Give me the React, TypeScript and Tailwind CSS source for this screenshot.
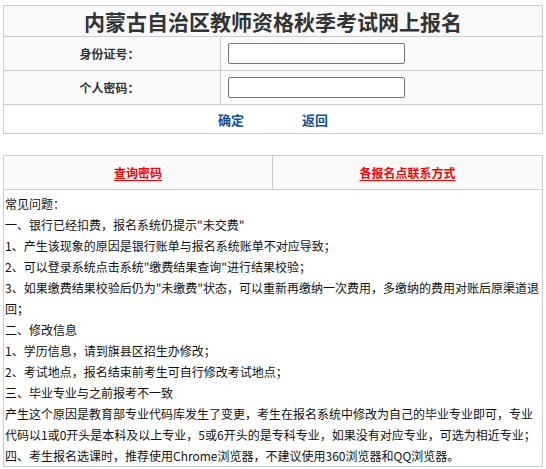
import React from "react";

const faq = [
  "常见问题：",
  "一、银行已经扣费，报名系统仍提示\"未交费\"",
  "1、产生该现象的原因是银行账单与报名系统账单不对应导致；",
  "2、可以登录系统点击系统\"缴费结果查询\"进行结果校验；",
  "3、如果缴费结果校验后仍为\"未缴费\"状态，可以重新再缴纳一次费用，多缴纳的费用对账后原渠道退",
  "回；",
  "二、修改信息",
  "1、学历信息，请到旗县区招生办修改；",
  "2、考试地点，报名结束前考生可自行修改考试地点；",
  "三、毕业专业与之前报考不一致",
  "产生这个原因是教育部专业代码库发生了变更，考生在报名系统中修改为自己的毕业专业即可，专业",
  "代码以1或0开头是本科及以上专业，5或6开头的是专科专业，如果没有对应专业，可选为相近专业；",
  "四、考生报名选课时，推荐使用Chrome浏览器，不建议使用360浏览器和QQ浏览器。",
];

export default function App() {
  return (
    <div
      className="min-h-[469px] bg-white pl-[3px] pt-[5px] [text-spacing-trim:space-all]"
      style={{ fontFamily: '"Noto Sans CJK SC", "Microsoft YaHei", sans-serif' }}
    >
      {/* login box */}
      <div className="w-[540px] border border-[#cccccc]">
        <div className="flex h-[31px] items-center justify-center border-b border-[#cccccc] bg-[#f9f9f9]">
          <h1 className="text-[21px] font-bold leading-none text-[#333333]">
            内蒙古自治区教师资格秋季考试网上报名
          </h1>
        </div>
        {["身份证号：", "个人密码："].map((label, i) => (
          <div key={label} className="flex h-[34px] border-b border-[#cccccc] bg-[#fafafa]">
            <div className="flex w-[217px] items-center justify-center border-r border-[#cccccc] pr-[5px] text-[12px] font-bold text-[#333333]">
              {label}
            </div>
            <div className="flex flex-1 items-center pl-[7px]">
              <input
                type={i === 1 ? "password" : "text"}
                className="h-[21px] w-[177px] rounded-[2px] border border-[#767676] bg-white outline-none"
              />
            </div>
          </div>
        ))}
        <div className="flex h-[28px] items-center justify-center gap-[58px] pt-[1px] text-[13px] font-bold text-[#15509a]">
          <a href="#">确定</a>
          <a href="#">返回</a>
        </div>
      </div>

      {/* links + faq */}
      <div className="mt-[21px] w-[540px] border border-[#cccccc]">
        <div className="flex h-[34px] border-b border-[#cccccc] bg-[#fafafa] text-[12px] font-bold text-[#ff0000]">
          <div className="flex w-[269px] items-center justify-center border-r border-[#cccccc]">
            <a href="#" className="underline underline-offset-2">查询密码</a>
          </div>
          <div className="flex flex-1 items-center justify-center">
            <a href="#" className="underline underline-offset-2">各报名点联系方式</a>
          </div>
        </div>
        <div className="pl-[1px] pt-[3px] text-[12px] leading-[21px] text-[#111111]">
          {faq.map((line, i) => (
            <p key={i} className="whitespace-nowrap">
              {line}
            </p>
          ))}
        </div>
      </div>
    </div>
  );
}
